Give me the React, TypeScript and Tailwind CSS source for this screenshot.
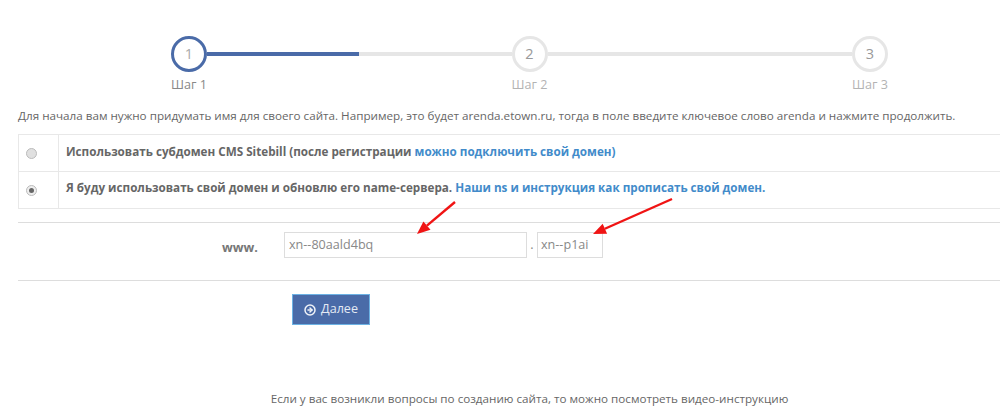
import { CircleArrowRight } from 'lucide-react';

const Circle = ({ n, active }: { n: number; active?: boolean }) => (
  <div
    className={`w-[36px] h-9 shrink-0 rounded-full border-[3px] flex items-center justify-center text-[14.5px] ${
      active ? 'border-[#4a6ba8] text-[#aaa]' : 'border-[#e6e6e6] text-[#999]'
    }`}
  >
    {n}
  </div>
);

const Arrow = ({ x1, y1, x2, y2 }: { x1: number; y1: number; x2: number; y2: number }) => {
  const a = Math.atan2(y2 - y1, x2 - x1);
  const len = 13;
  const w = 5.5;
  const bx = x2 - len * Math.cos(a);
  const by = y2 - len * Math.sin(a);
  const px = -Math.sin(a) * w;
  const py = Math.cos(a) * w;
  return (
    <g>
      <line x1={x1} y1={y1} x2={bx} y2={by} stroke="#f01414" strokeWidth="2.4" />
      <polygon points={`${x2},${y2} ${bx + px},${by + py} ${bx - px},${by - py}`} fill="#f01414" />
    </g>
  );
};

export default function App() {
  return (
    <div className="relative w-[1000px] h-[407px] overflow-hidden bg-white font-['Open_Sans',sans-serif] text-[11.66px] text-[#666]">
      {/* stepper */}
      <div className="pt-[36px] pl-[171px]">
        <div className="flex items-center w-[717px]">
          <Circle n={1} active />
          <div className="flex-1 h-[4px] bg-[#e6e6e6]">
            <div className="w-1/2 h-full bg-[#4a6ba8]" />
          </div>
          <Circle n={2} />
          <div className="flex-1 h-[4px] bg-[#e6e6e6]" />
          <Circle n={3} />
        </div>
        <div className="flex justify-between w-[717px] mt-[3px] text-[12.6px] leading-[20px] text-[#b3b3b3]">
          <span className="w-9 flex justify-center whitespace-nowrap text-[#888]">Шаг 1</span>
          <span className="w-9 flex justify-center whitespace-nowrap">Шаг 2</span>
          <span className="w-9 flex justify-center whitespace-nowrap">Шаг 3</span>
        </div>
      </div>

      <p className="ml-[18px] mt-[12px] leading-[17px] whitespace-nowrap">
        Для начала вам нужно придумать имя для своего сайта. Например, это будет arenda.etown.ru, тогда в поле введите ключевое слово arenda и нажмите продолжить.
      </p>

      {/* options */}
      <div className="ml-[18px] mt-[10px] border-y border-l border-[#e8e8e8] font-bold text-[11.68px]">
        <div className="flex h-[37px] border-b border-[#e8e8e8]">
          <div className="w-[40px] border-r border-[#e8e8e8] flex items-center pl-[7px]">
            <span className="w-[11px] h-[11px] rounded-full border border-[#bbb] bg-[#e0e0e0]" />
          </div>
          <div className="pl-[7px] pt-[8px] leading-[17px]">
            Использовать субдомен CMS Sitebill (после регистрации <a className="text-[#428bca]">можно подключить свой домен)</a>
          </div>
        </div>
        <div className="flex h-[36px]">
          <div className="w-[40px] border-r border-[#e8e8e8] flex items-center pl-[7px]">
            <span className="w-[11px] h-[11px] rounded-full border border-[#bbb] bg-[#eee] flex items-center justify-center">
              <span className="w-[5px] h-[5px] rounded-full bg-[#666]" />
            </span>
          </div>
          <div className="pl-[7px] pt-[7px] leading-[17px]">
            Я буду использовать свой домен и обновлю его name-сервера. <a className="text-[#428bca]">Наши ns и инструкция как прописать свой домен.</a>
          </div>
        </div>
      </div>

      {/* domain form */}
      <div className="ml-[18px] mt-[13px] border-y border-[#ddd] h-[59px] pt-[9px] text-[12.6px]">
        <div className="flex items-center h-[26px]">
          <span className="ml-[204px] w-[62px] pt-[6px] font-bold text-[#777]">www.</span>
          <div className="w-[243px] h-[26px] border border-[#ddd] pl-[4px] flex items-center text-[#888]">xn--80aald4bq</div>
          <span className="w-[10px] text-center text-[#888]">.</span>
          <div className="w-[66px] h-[26px] border border-[#ddd] pl-[3px] flex items-center text-[#888]">xn--p1ai</div>
        </div>
      </div>

      <div className="ml-[292px] mt-[13px]">
        <button className="w-[78px] h-[31px] bg-[#4a6ba8] border border-[#6cb2e4] text-[#e4eaf4] flex items-center justify-center gap-[5px] text-[12.6px]">
          <CircleArrowRight size={12} strokeWidth={3} color="#f0f3f8" />
          Далее
        </button>
      </div>

      <p className="mt-[65px] text-center ml-[59px] leading-[17px]">
        Если у вас возникли вопросы по созданию сайта, то можно посмотреть видео-инструкцию
      </p>

      {/* red annotation arrows */}
      <svg className="absolute left-0 top-0 pointer-events-none" width="1000" height="407">
        <Arrow x1={455} y1={202} x2={417} y2={234} />
        <Arrow x1={672} y1={199} x2={593} y2={234} />
      </svg>
    </div>
  );
}
